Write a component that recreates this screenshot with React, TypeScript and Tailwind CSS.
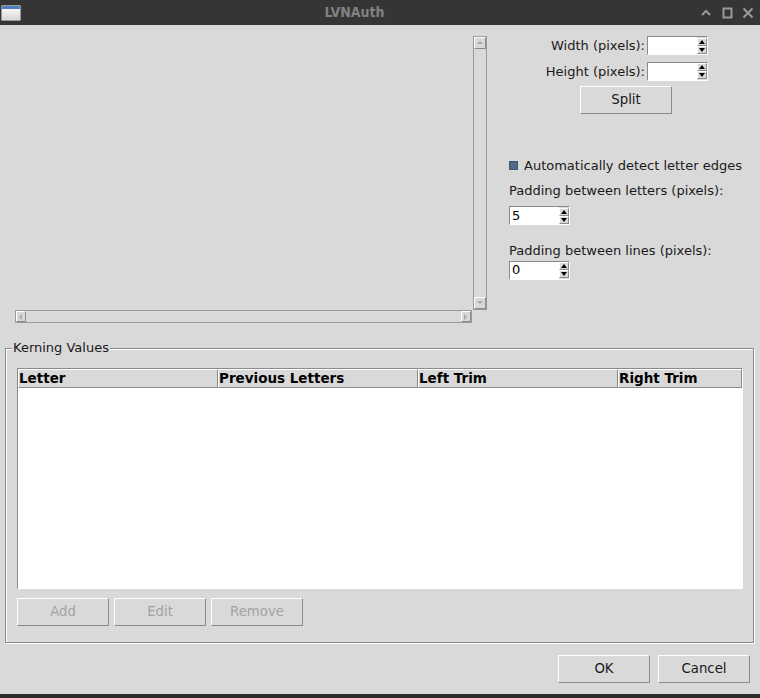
import React from "react";

const font = { fontFamily: '"DejaVu Sans", "Liberation Sans", sans-serif' };

const Raised = "border border-t-white border-l-white border-b-[#8a8a8a] border-r-[#8a8a8a]";
const Sunken = "border border-t-[#8a8a8a] border-l-[#8a8a8a] border-b-white border-r-white";

const Arrow = ({ dir }: { dir: "up" | "down" | "left" | "right" }) => {
  const pts = {
    up: "1,5 4,2 7,5",
    down: "1,2 4,5 7,2",
    left: "5,1 2,4 5,7",
    right: "2,1 5,4 2,7",
  }[dir];
  return (
    <svg width="8" height="8" viewBox="0 0 8 8">
      <polygon points={pts} fill="#a8a8a8" />
    </svg>
  );
};

const SpinArrow = ({ up }: { up: boolean }) => (
  <div className={`flex h-[8px] w-[10px] items-center justify-center bg-[#d9d9d9] ${Raised}`}>
    <svg width="6" height="4" viewBox="0 0 6 4">
      <polygon points={up ? "0,4 3,0 6,4" : "0,0 3,4 6,0"} fill="#000" />
    </svg>
  </div>
);

const Spinbox = ({ value = "" }: { value?: string }) => (
  <div className={`flex h-[19px] w-[61px] items-stretch bg-white ${Sunken}`}>
    <div className="flex flex-1 items-center pl-[2px] text-[13px] text-black">{value}</div>
    <div className="flex flex-col justify-center bg-[#d9d9d9]">
      <SpinArrow up />
      <SpinArrow up={false} />
    </div>
  </div>
);

const Button = ({ label, disabled }: { label: string; disabled?: boolean }) => (
  <div
    className={`flex h-[28px] w-[92px] items-center justify-center bg-[#d9d9d9] text-[13.3px] ${Raised} ${
      disabled ? "text-[#a3a3a3]" : "text-[#1a1a1a]"
    }`}
  >
    {label}
  </div>
);

const TitleBar = () => (
  <div className="flex h-[25px] items-center bg-[#353535] pl-[1px] pr-[4px]">
    <div className="flex h-[16px] w-[20px] flex-col overflow-hidden rounded-[1px] border border-[#9a9a9a] bg-gradient-to-b from-white to-[#d8d8d8]">
      <div className="h-[3px] bg-[#4f7fc0]" />
    </div>
    <div
      className="flex-1 pr-[12px] text-center text-[14px] font-semibold text-[#828282]"
      style={{ fontFamily: '"DejaVu Sans Condensed", "DejaVu Sans", sans-serif' }}
    >
      LVNAuth
    </div>
    <div className="flex items-center gap-[9px] pr-[2px]">
      <svg width="12" height="12" viewBox="0 0 12 12">
        <polyline points="2,8 6,4 10,8" fill="none" stroke="#9a9a9a" strokeWidth="2" />
      </svg>
      <svg width="12" height="12" viewBox="0 0 12 12">
        <rect x="2.5" y="1.5" width="8" height="9" fill="none" stroke="#9a9a9a" strokeWidth="2" />
      </svg>
      <svg width="12" height="12" viewBox="0 0 12 12">
        <path d="M1.5 1.5 L10.5 10.5 M10.5 1.5 L1.5 10.5" stroke="#9a9a9a" strokeWidth="2" />
      </svg>
    </div>
  </div>
);

const Canvas = () => (
  <div className="ml-[15px] mt-[11px] grid grid-cols-[458px_14px] grid-rows-[274px_13px]">
    <div className="bg-[#d9d9d9]" />
    <div className="flex flex-col border border-[#9a9a9a] bg-[#d9d9d9]">
      <div className={`flex h-[12px] items-center justify-center ${Raised}`}>
        <Arrow dir="up" />
      </div>
      <div className="flex-1" />
      <div className={`flex h-[12px] items-center justify-center ${Raised}`}>
        <Arrow dir="down" />
      </div>
    </div>
    <div className="mr-[1px] flex border border-[#9a9a9a] bg-[#d9d9d9]">
      <div className={`flex w-[10px] items-center justify-center ${Raised}`}>
        <Arrow dir="left" />
      </div>
      <div className="flex-1" />
      <div className={`flex w-[10px] items-center justify-center ${Raised}`}>
        <Arrow dir="right" />
      </div>
    </div>
    <div />
  </div>
);

const RightPanel = () => (
  <div className="flex flex-1 flex-col pt-[11px] text-[13px] text-[#1a1a1a]">
    <div className="grid w-[220px] grid-cols-[158px_61px] items-center gap-x-[2px] gap-y-[6px]">
      <span className="text-right">Width (pixels):</span>
      <Spinbox />
      <span className="text-right">Height (pixels):</span>
      <Spinbox />
    </div>
    <div className="ml-[93px] mt-[5px]">
      <Button label="Split" />
    </div>
    <div className="mt-[42px] flex flex-col pl-[22px]">
      <div className="flex items-center gap-[6px]">
        <div className="h-[9px] w-[9px] border border-[#3c566f] bg-[#4e6a86]" />
        <span>Automatically detect letter edges</span>
      </div>
      <div className="mt-[5px]">Padding between letters (pixels):</div>
      <div className="mt-[6px]">
        <Spinbox value="5" />
      </div>
      <div className="mt-[16px]">Padding between lines (pixels):</div>
      <div>
        <Spinbox value="0" />
      </div>
    </div>
  </div>
);

const cols = ["Letter", "Previous Letters", "Left Trim", "Right Trim"];

const Kerning = () => (
  <div className="relative ml-[5px] mr-[6px] mt-[25px] h-[295px] border border-[#8a8a8a] shadow-[inset_1px_1px_0_#fff,1px_1px_0_#fff]">
    <div className="absolute left-[6px] top-[-10px] bg-[#d9d9d9] px-[1px] text-[13px] leading-[18px] text-[#1a1a1a]">
      Kerning Values
    </div>
    <div className="ml-[11px] mr-[10px] mt-[19px] flex h-[221px] flex-col border border-t-[#8a8a8a] border-l-[#8a8a8a] border-b-white border-r-white bg-white">
      <div className="flex h-[19px] bg-[#d9d9d9]">
        {cols.map((c, i) => (
          <div
            key={c}
            className={`flex items-center text-[13.5px] font-bold text-black ${Raised} ${
              i === 3 ? "flex-1" : "w-[200px]"
            }`}
          >
            {c}
          </div>
        ))}
      </div>
      <div className="flex-1 bg-white" />
    </div>
    <div className="ml-[11px] mt-[9px] flex gap-[5px]">
      <Button label="Add" disabled />
      <Button label="Edit" disabled />
      <Button label="Remove" disabled />
    </div>
  </div>
);

export default function App() {
  return (
    <div className="flex h-[698px] w-[760px] flex-col overflow-hidden bg-[#d9d9d9]" style={font}>
      <TitleBar />
      <div className="flex">
        <Canvas />
        <RightPanel />
      </div>
      <Kerning />
      <div className="mr-[10px] mt-[12px] flex justify-end gap-[8px]">
        <Button label="OK" />
        <Button label="Cancel" />
      </div>
      <div className="mt-auto h-[4px] bg-[#2b2b2b]" />
    </div>
  );
}
